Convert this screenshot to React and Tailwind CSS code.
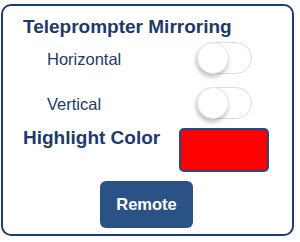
export default function App() {
  return (
    <div className="w-[300px] h-[242px] bg-white pt-[4px] pl-[1px] font-['Liberation_Sans',Arial,sans-serif]">
      <div className="w-[293px] h-[232px] border-2 border-[#1f3d75] rounded-[10px] flex flex-col">
        <h1 className="mt-[10px] ml-[20px] text-[19px] leading-[22px] font-bold text-[#1d3a6c]">Teleprompter Mirroring</h1>
        <div className="flex items-center h-[33px] mt-[3px]">
          <span className="ml-[44px] w-[150px] pt-[3px] text-[16.5px] text-[#1d3a6c]">Horizontal</span>
          <Toggle />
        </div>
        <div className="flex items-center h-[33px] mt-[12px]">
          <span className="ml-[44px] w-[150px] pt-[4px] text-[16.5px] text-[#1d3a6c]">Vertical</span>
          <Toggle />
        </div>
        <div className="flex items-start mt-[9px]">
          <span className="ml-[20px] w-[156px] mt-[-1px] text-[19px] leading-[22px] font-bold text-[#1d3a6c]">Highlight Color</span>
          <div className="w-[90px] h-[44px] bg-[#ff0000] border-2 border-[#1f4a85] rounded-[5px]" />
        </div>
        <div className="flex justify-center mt-[9px] pr-[2px]">
          <button className="w-[93px] h-[47px] rounded-[6px] bg-[#2a5285] text-white text-[16.5px] font-bold">Remote</button>
        </div>
      </div>
    </div>
  );
}

function Toggle() {
  return (
    <div className="relative w-[55px] h-[32px] rounded-full border border-[#dcdcdc] bg-white">
      <div className="absolute left-[-1px] top-[-1px] w-[32px] h-[32px] rounded-full bg-white border border-[#e4e4e4] shadow-[-1px_3px_4px_rgba(0,0,0,0.25)]" />
    </div>
  );
}
